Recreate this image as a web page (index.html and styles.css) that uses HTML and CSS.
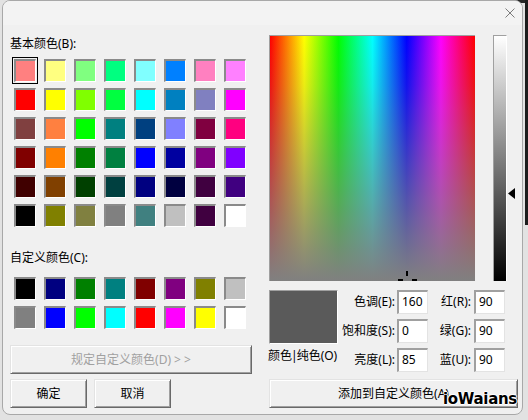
FILE: index.html
```html
<!DOCTYPE html>
<html>
<head>
<meta charset="utf-8">
<link rel="stylesheet" href="styles.css">
</head>
<body>
<div class="window">
  <div class="titlebar">
    <svg class="close" width="10" height="10" viewBox="0 0 10 10"><path d="M0.5 0.5L9.5 9.5M9.5 0.5L0.5 9.5" stroke="#7c7c7c" stroke-width="1" fill="none"/></svg>
  </div>
  <div class="content">
    <div class="left">
      <div class="label">基本颜色(B):</div>
      <div class="swatches">
        <div class="sw selected" style="background:#ff8080"></div>
        <div class="sw" style="background:#ffff80"></div>
        <div class="sw" style="background:#80ff80"></div>
        <div class="sw" style="background:#00ff80"></div>
        <div class="sw" style="background:#80ffff"></div>
        <div class="sw" style="background:#0080ff"></div>
        <div class="sw" style="background:#ff80c0"></div>
        <div class="sw" style="background:#ff80ff"></div>

        <div class="sw" style="background:#ff0000"></div>
        <div class="sw" style="background:#ffff00"></div>
        <div class="sw" style="background:#80ff00"></div>
        <div class="sw" style="background:#00ff40"></div>
        <div class="sw" style="background:#00ffff"></div>
        <div class="sw" style="background:#0080c0"></div>
        <div class="sw" style="background:#8080c0"></div>
        <div class="sw" style="background:#ff00ff"></div>

        <div class="sw" style="background:#804040"></div>
        <div class="sw" style="background:#ff8040"></div>
        <div class="sw" style="background:#00ff00"></div>
        <div class="sw" style="background:#008080"></div>
        <div class="sw" style="background:#004080"></div>
        <div class="sw" style="background:#8080ff"></div>
        <div class="sw" style="background:#800040"></div>
        <div class="sw" style="background:#ff0080"></div>

        <div class="sw" style="background:#800000"></div>
        <div class="sw" style="background:#ff8000"></div>
        <div class="sw" style="background:#008000"></div>
        <div class="sw" style="background:#008040"></div>
        <div class="sw" style="background:#0000ff"></div>
        <div class="sw" style="background:#0000a0"></div>
        <div class="sw" style="background:#800080"></div>
        <div class="sw" style="background:#8000ff"></div>

        <div class="sw" style="background:#400000"></div>
        <div class="sw" style="background:#804000"></div>
        <div class="sw" style="background:#004000"></div>
        <div class="sw" style="background:#004040"></div>
        <div class="sw" style="background:#000080"></div>
        <div class="sw" style="background:#000040"></div>
        <div class="sw" style="background:#400040"></div>
        <div class="sw" style="background:#400080"></div>

        <div class="sw" style="background:#000000"></div>
        <div class="sw" style="background:#808000"></div>
        <div class="sw" style="background:#808040"></div>
        <div class="sw" style="background:#808080"></div>
        <div class="sw" style="background:#408080"></div>
        <div class="sw" style="background:#c0c0c0"></div>
        <div class="sw" style="background:#400040"></div>
        <div class="sw" style="background:#ffffff"></div>
      </div>
      <div class="label custom-label">自定义颜色(C):</div>
      <div class="swatches custom">
        <div class="sw" style="background:#000000"></div>
        <div class="sw" style="background:#000080"></div>
        <div class="sw" style="background:#008000"></div>
        <div class="sw" style="background:#008080"></div>
        <div class="sw" style="background:#800000"></div>
        <div class="sw" style="background:#800080"></div>
        <div class="sw" style="background:#808000"></div>
        <div class="sw" style="background:#c0c0c0"></div>

        <div class="sw" style="background:#808080"></div>
        <div class="sw" style="background:#0000ff"></div>
        <div class="sw" style="background:#00ff00"></div>
        <div class="sw" style="background:#00ffff"></div>
        <div class="sw" style="background:#ff0000"></div>
        <div class="sw" style="background:#ff00ff"></div>
        <div class="sw" style="background:#ffff00"></div>
        <div class="sw" style="background:#ffffff"></div>
      </div>
      <button class="btn wide" disabled>规定自定义颜色(D) &gt; &gt;</button>
      <div class="btnrow">
        <button class="btn small">确定</button>
        <button class="btn small">取消</button>
      </div>
    </div>
    <div class="right">
      <div class="pickers">
        <div class="spectrum">
          <div class="cross cross-v"></div>
          <div class="cross cross-l"></div>
          <div class="cross cross-r"></div>
        </div>
        <div class="lum"></div>
        <svg class="pointer" width="7" height="11" viewBox="0 0 7 11"><path d="M0 5.5L7 0V11Z" fill="#000"/></svg>
      </div>
      <div class="lower">
        <div class="preview"></div>
        <div class="flabel r1 c1">色调(E):</div>
        <div class="field r1 c2">160</div>
        <div class="flabel r1 c3">红(R):</div>
        <div class="field r1 c4">90</div>
        <div class="flabel r2 c1">饱和度(S):</div>
        <div class="field r2 c2">0</div>
        <div class="flabel r2 c3">绿(G):</div>
        <div class="field r2 c4">90</div>
        <div class="solid">颜色<span class="bar">|</span>纯色(O)</div>
        <div class="flabel r3 c1">亮度(L):</div>
        <div class="field r3 c2">85</div>
        <div class="flabel r3 c3">蓝(U):</div>
        <div class="field r3 c4">90</div>
      </div>
      <div class="addwrap">
        <button class="btn add">添加到自定义颜色(A)</button>
        <span class="watermark">ioWaians</span>
      </div>
    </div>
  </div>
</div>
</body>
</html>
```

FILE: styles.css
```css
* { box-sizing: border-box; }
html, body { margin: 0; padding: 0; }
body {
  width: 528px;
  height: 420px;
  overflow: hidden;
  font-family: "Noto Sans", "Noto Sans CJK SC", sans-serif;
  font-size: 12px;
  color: #000;
  background:
    linear-gradient(#1c1c1c, #1c1c1c) no-repeat 525px 0 / 3px 225px,
    linear-gradient(#262626, #262626) no-repeat 451px 0 / 77px 3px,
    #e2e2e2;
}
.window {
  margin-left: 2px;
  width: 521px;
  height: 415px;
  border: 1px solid #a8a8a8;
  border-radius: 8px;
  background: #f0f0f0;
  overflow: hidden;
  position: relative;
}
.titlebar {
  height: 24px;
  background: #f3f3f3;
  display: flex;
  justify-content: flex-end;
  align-items: flex-start;
  padding: 7px 7px 0 0;
}
.close { display: block; }
.content {
  display: flex;
  gap: 17px;
  padding-left: 7px;
}
.left { width: 242px; display: flex; flex-direction: column; }
.label { line-height: 14px; height: 14px; margin-top: 12px; white-space: nowrap; }
.custom-label { margin-top: 24px; }
.swatches {
  display: grid;
  grid-template-columns: repeat(8, 22px);
  grid-auto-rows: 23px;
  column-gap: 8px;
  row-gap: 6px;
  padding-left: 4px;
  margin-top: 8px;
}
.swatches.custom { margin-top: 12px; }
.sw {
  border-style: solid;
  border-width: 2px 1px 1px 2px;
  border-color: #8a8a8a #ffffff #ffffff #8a8a8a;
  position: relative;
}
.sw.selected { outline: 1px solid #000; outline-offset: 1px; }
.btn {
  font-family: inherit;
  font-size: 12px;
  color: #000;
  background: #f0f0f0;
  padding: 0;
  border: 1px solid;
  border-color: #e3e3e3 #696969 #696969 #e3e3e3;
  box-shadow: inset 1px 1px #ffffff, inset -1px -1px #a0a0a0;
  height: 29px;
  line-height: 26px;
  text-align: center;
}
.btn.wide { width: 242px; margin-top: 16px; color: #a0a0a0; }
.btnrow { display: flex; gap: 7px; margin-top: 5px; }
.btn.small { width: 77px; }

.right { width: 249px; display: flex; flex-direction: column; }
.pickers { display: flex; align-items: flex-start; margin-top: 10px; }
.spectrum {
  width: 206px;
  height: 246px;
  border-top: 1px solid #a0a0a0;
  border-left: 1px solid #a0a0a0;
  position: relative;
  overflow: hidden;
  background:
    linear-gradient(to bottom, rgba(128,128,128,0), rgba(128,128,128,0.15) 20%, rgba(128,128,128,1)),
    linear-gradient(to right, #ff0000, #ffff00 16.67%, #00ff00 33.33%, #00ffff 50%, #0000ff 66.67%, #ff00ff 83.33%, #ff0000);
}
.cross { position: absolute; background: #000; }
.cross-v { left: 136px; top: 235px; width: 2px; height: 5px; }
.cross-l { left: 128px; top: 243px; width: 5px; height: 2px; }
.cross-r { left: 142px; top: 243px; width: 5px; height: 2px; }
.lum {
  margin-left: 18px;
  width: 14px;
  height: 246px;
  border-top: 1px solid #a0a0a0;
  border-left: 1px solid #a0a0a0;
  border-right: 1px solid #ffffff;
  background: linear-gradient(to bottom, #ffffff, #000000);
}
.pointer { display: block; margin-left: 1px; margin-top: 153px; }

.lower {
  display: grid;
  grid-template-columns: 69px 59px 31px 46px 31px;
  grid-template-rows: 24px 24px 24px;
  row-gap: 5px;
  margin-top: 9px;
}
.preview {
  grid-column: 1;
  grid-row: 1 / span 2;
  height: 54px;
  background: #5a5a5a;
  border: 1px solid;
  border-color: #a0a0a0 #ffffff #ffffff #a0a0a0;
}
.solid {
  grid-column: 1;
  grid-row: 3;
  margin-left: -1px;
  line-height: 16px;
  white-space: nowrap;
  align-self: start;
}
.bar { margin: 0 -1px; }
.flabel {
  text-align: right;
  white-space: nowrap;
  line-height: 24px;
}
.flabel.c1 { grid-column: 2; padding-right: 2px; }
.flabel.c3 { grid-column: 4; padding-right: 3px; }
.field.c2 { grid-column: 3; }
.field.c4 { grid-column: 5; }
.r1 { grid-row: 1; }
.r2 { grid-row: 2; }
.r3 { grid-row: 3; }
.field {
  background: #fff;
  border-style: solid;
  border-width: 2px 1px 1px 2px;
  border-color: #a0a0a0 #e3e3e3 #e3e3e3 #a0a0a0;
  padding-left: 3px;
  line-height: 19px;
}
.addwrap { position: relative; margin-top: 7px; }
.btn.add { width: 249px; display: block; }
.watermark {
  position: absolute;
  right: 1px;
  top: 12px;
  font-family: "DejaVu Sans", sans-serif;
  font-weight: bold;
  font-size: 15px;
  line-height: 16px;
  letter-spacing: -0.3px;
  color: #000;
  text-shadow: 1px 0 #fff, -1px 0 #fff, 0 1px #fff, 0 -1px #fff;
}
```
